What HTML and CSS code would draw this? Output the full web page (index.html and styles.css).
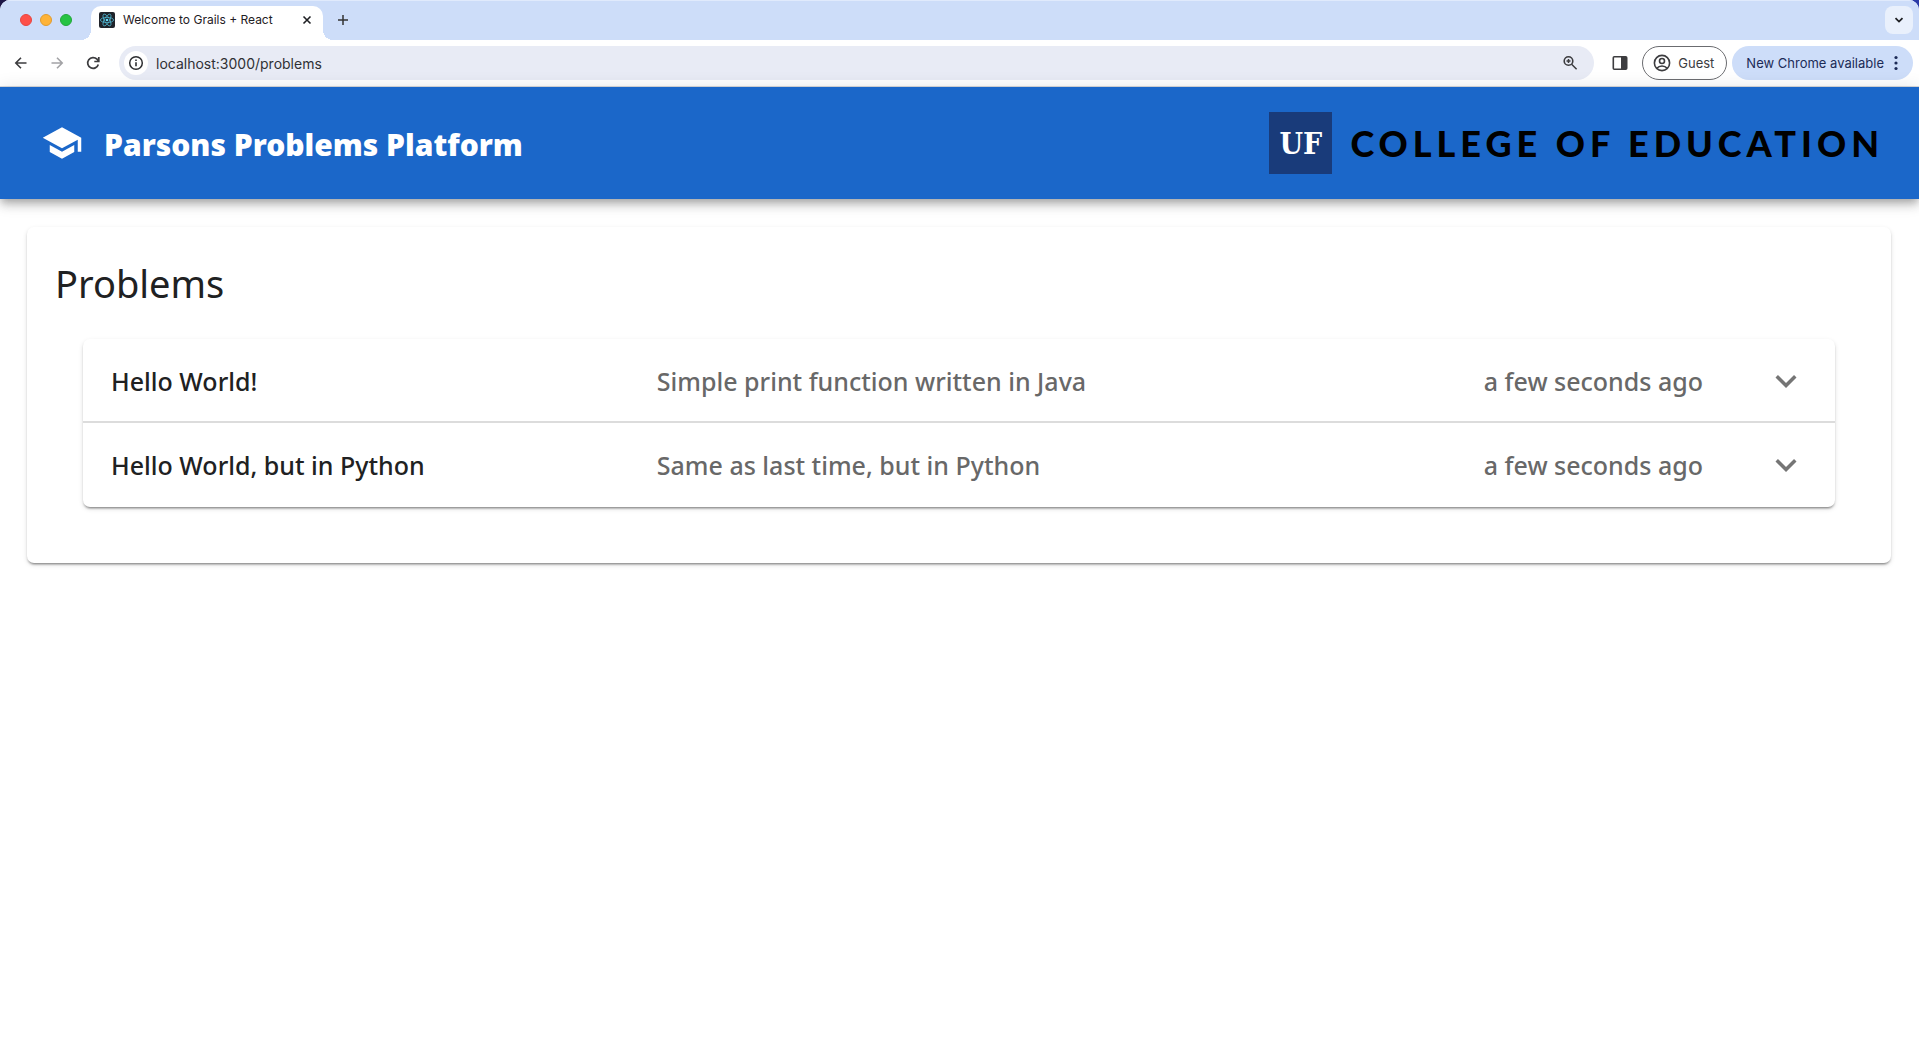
FILE: index.html
```html
<!DOCTYPE html>
<html lang="en">
<head>
<meta charset="utf-8">
<title>Welcome to Grails + React</title>
<link rel="stylesheet" href="styles.css">
</head>
<body>
<div class="desktop">
<div class="window">
  <div class="tabstrip">
    <div class="lights"><span class="light red"></span><span class="light yellow"></span><span class="light green"></span></div>
    <div class="tab">
      <svg class="favicon" viewBox="0 0 16 16" aria-hidden="true"><rect width="16" height="16" rx="2" fill="#20232a"/><g fill="none" stroke="#4fb4ce" stroke-width=".8"><ellipse cx="8" cy="8" rx="6.6" ry="2.6"/><ellipse cx="8" cy="8" rx="6.6" ry="2.6" transform="rotate(60 8 8)"/><ellipse cx="8" cy="8" rx="6.6" ry="2.6" transform="rotate(120 8 8)"/></g><circle cx="8" cy="8" r="1.3" fill="#61dafb"/></svg>
      <span class="tab-title">Welcome to Grails + React</span>
      <button class="icon-btn close" aria-label="Close tab"><svg width="16" height="16" viewBox="0 0 16 16"><path d="M4.5 4.5l7 7M11.5 4.5l-7 7" fill="none" stroke="#1f2024" stroke-width="1.6"/></svg></button>
    </div>
    <button class="icon-btn new-tab" aria-label="New tab"><svg width="16" height="16" viewBox="0 0 16 16"><path d="M8 3v10M3 8h10" fill="none" stroke="#333" stroke-width="1.5"/></svg></button>
    <button class="tab-search" aria-label="Search tabs"><svg width="16" height="16" viewBox="0 0 16 16"><path d="M4.5 6.2L8 9.6l3.5-3.4" fill="none" stroke="#1f2024" stroke-width="1.8"/></svg></button>
  </div>
  <div class="toolbar">
    <div class="nav">
      <button class="icon-btn" aria-label="Back"><svg width="16" height="16" viewBox="0 0 16 16"><path d="M13.5 8H3M8 2.800L2.800 8 8 13.200" fill="none" stroke="#3c3c3f" stroke-width="1.6"/></svg></button>
      <button class="icon-btn" aria-label="Forward" disabled><svg width="16" height="16" viewBox="0 0 16 16"><path d="M2.500 8H13M8 2.800L13.200 8 8 13.200" fill="none" stroke="#a3a3a6" stroke-width="1.6"/></svg></button>
      <button class="icon-btn" aria-label="Reload"><svg width="16" height="16" viewBox="0 0 16 16"><path d="M13.300 9.400A5.400 5.400 0 1 1 12 4.200L13.600 6M13.800 2v4.500H9.300" fill="none" stroke="#3c3c3f" stroke-width="1.7"/></svg></button>
    </div>
    <div class="omnibox">
      <button class="site-info" aria-label="Site information"><svg width="16" height="16" viewBox="0 0 16 16"><circle cx="8" cy="8" r="6.3" fill="none" stroke="#2d2e31" stroke-width="1.5"/><path d="M8 7.300v4M8 4.500v1.500" stroke="#2d2e31" stroke-width="1.6"/></svg></button>
      <input class="url" type="text" aria-label="Address" value="localhost:3000/problems">
      <button class="icon-btn" aria-label="Zoom"><svg width="16" height="16" viewBox="0 0 16 16"><circle cx="6.5" cy="6" r="4.3" fill="none" stroke="#3c3c3f" stroke-width="1.6"/><path d="M9.600 9.200l5 5M6.500 4v4M4.500 6h4" stroke="#3c3c3f" stroke-width="1.5"/></svg></button>
    </div>
    <button class="icon-btn side-panel" aria-label="Side panel"><svg width="16" height="16" viewBox="0 0 16 16"><rect x="1.3" y="1.8" width="13.4" height="12.4" rx="1" fill="none" stroke="#3c3c3f" stroke-width="1.6"/><path d="M9 2h6v12H9z" fill="#3c3c3f"/></svg></button>
    <button class="guest"><svg width="18" height="18" viewBox="0 0 18 18"><g fill="none" stroke="#3c3c3f" stroke-width="1.6"><circle cx="9" cy="9" r="7.6"/><circle cx="9" cy="7" r="2.5"/><path d="M3.800 14.200c2.600-3 7.800-3 10.400 0"/></g></svg>Guest</button>
    <button class="update">New Chrome available<svg width="4" height="16" viewBox="0 0 4 16" fill="#1c2b57"><circle cx="2" cy="2.5" r="1.6"/><circle cx="2" cy="8" r="1.6"/><circle cx="2" cy="13.5" r="1.6"/></svg></button>
  </div>
  <header class="app-bar">
    <svg class="school" width="42" height="42" viewBox="0 0 24 24" fill="#fff" aria-hidden="true"><path d="M5 13.180v4L12 21l7-3.820v-4L12 17l-7-3.820zM12 3L1 9l11 6 9-4.910V17h2V9L12 3z"/></svg>
    <h1 class="brand">Parsons Problems Platform</h1>
    <div class="college"><span class="uf">UF</span><span class="college-name">COLLEGE OF EDUCATION</span></div>
  </header>
  <main class="page">
    <section class="card">
      <h2 class="heading">Problems</h2>
      <div class="problems">
        <button class="problem" aria-expanded="false"><span class="name">Hello World!</span><span>Simple print function written in Java</span><span>a few seconds ago</span><svg width="42" height="42" viewBox="0 0 24 24" fill="#757575"><path d="M16.590 8.590L12 13.170 7.410 8.590 6 10l6 6 6-6z"/></svg></button>
        <button class="problem" aria-expanded="false"><span class="name">Hello World, but in Python</span><span>Same as last time, but in Python</span><span>a few seconds ago</span><svg width="42" height="42" viewBox="0 0 24 24" fill="#757575"><path d="M16.590 8.590L12 13.170 7.410 8.590 6 10l6 6 6-6z"/></svg></button>
      </div>
    </section>
  </main>
</div>
</div>
</body>
</html>
```
FILE: styles.css
```css
* { box-sizing: border-box; }
body { margin: 0; background: #fff; font-family: "Noto Sans", sans-serif; }
button { border: 0; padding: 0; background: none; font: inherit; color: inherit; }
svg { display: block; flex: none; }
h1, h2 { margin: 0; }

.desktop { background: linear-gradient(90deg, #1d1747, #2a3aa8); }
.window { min-height: 100vh; background: #fff; border-radius: 10px 10px 0 0; overflow: hidden; }
.icon-btn { display: flex; align-items: center; justify-content: center; }

.tabstrip { display: flex; align-items: center; height: 40px; padding: 0 6px 0 20px; background: #cdddf9; box-shadow: inset 0 1px #e0eafc; font-family: Inter, sans-serif; font-size: 12px; color: #1f2024; }
.lights { display: flex; gap: 8px; width: 71px; }
.light { width: 12px; height: 12px; border-radius: 50%; }
.red { background: #fe5049; border: 1px solid #e8453f; }
.yellow { background: #feb338; border: 1px solid #e09c2f; }
.green { background: #26c343; border: 1px solid #22a83a; }
.tab { position: relative; align-self: flex-end; display: flex; align-items: center; width: 232px; height: 34px; padding: 0 8px 6px; background: #fff; border-radius: 10px 10px 0 0; }
.tab::before, .tab::after { content: ""; position: absolute; bottom: 0; width: 10px; height: 10px; }
.tab::before { right: 100%; background: radial-gradient(circle at 0 0, transparent 10px, #fff 10px); }
.tab::after { left: 100%; background: radial-gradient(circle at 100% 0, transparent 10px, #fff 10px); }
.favicon { width: 16px; height: 16px; }
.tab-title { margin-left: 8px; line-height: 14px; }
.close { margin-left: auto; }
.new-tab { margin-left: 12px; }
.tab-search { display: flex; align-items: center; justify-content: center; width: 28px; height: 28px; margin-left: auto; background: #e9f0fc; border-radius: 8px; }

.toolbar { display: flex; align-items: center; height: 47px; padding: 0 6px 0 13px; background: #fff; border-bottom: 1px solid #d9dadd; font-family: Inter, sans-serif; font-size: 13px; color: #3c3c3f; }
.nav { display: flex; gap: 20px; margin-right: 18px; }
.omnibox { flex: 1; display: flex; align-items: center; height: 34px; padding: 0 16px 0 5px; background: #e8ebf5; border-radius: 17px; }
.site-info { display: flex; align-items: center; justify-content: center; width: 24px; height: 24px; background: #fff; border-radius: 50%; }
.url { flex: 1; min-width: 0; margin-left: 8px; padding: 0; border: 0; outline: 0; background: none; font: 14px Inter, sans-serif; color: #303134; }
.side-panel { margin: 0 14px 0 18px; }
.guest { display: flex; align-items: center; gap: 7px; height: 34px; padding: 0 12px 0 10px; border: 1px solid #6b6c70; border-radius: 17px; }
.update { display: flex; align-items: center; gap: 10px; height: 34px; margin-left: 5px; padding: 0 15px 0 14px; background: #cdddf9; border-radius: 17px; color: #1c2b57; }

.app-bar { position: relative; display: flex; align-items: center; height: 112px; padding: 0 35px 0 41px; background: #1b67c9; color: #fff; box-shadow: 0 4px 7px -2px rgba(0,0,0,.2), 0 7px 9px rgba(0,0,0,.14), 0 2px 18px rgba(0,0,0,.12); }
.brand { margin-left: 21px; padding-top: 4px; font-size: 30px; font-weight: 900; line-height: 42px; white-space: nowrap; }
.college { display: flex; align-items: center; gap: 18px; margin-left: auto; }
.uf { display: flex; align-items: center; justify-content: center; width: 63px; height: 62px; background: #193b7a; font-family: "DejaVu Serif Condensed", "DejaVu Serif", serif; font-size: 30px; font-weight: 700; }
.college-name { color: #000; font-family: Lato, sans-serif; font-size: 36px; font-weight: 900; line-height: 44px; letter-spacing: 5px; white-space: nowrap; }

.page { padding: 28px 28px 28px 27px; }
.card { padding: 28px 28px 56px; background: #fff; border-radius: 7px; box-shadow: 0 3px 2px -2px rgba(0,0,0,.3), 0 2px 2px rgba(0,0,0,.14), 0 2px 5px rgba(0,0,0,.12); }
.heading { padding-bottom: 28px; font-size: 38px; font-weight: 400; line-height: 56px; color: #202122; }
.problems { margin: 0 28px; background: #fff; border-radius: 7px; box-shadow: 0 3px 2px -2px rgba(0,0,0,.3), 0 2px 2px rgba(0,0,0,.14), 0 2px 5px rgba(0,0,0,.12); }
.problem { display: grid; grid-template-columns: 33fr 50fr 17fr 42px; align-items: center; width: 100%; height: 84px; padding: 0 28px; font-size: 25px; font-weight: 500; line-height: 40px; text-align: left; color: #686868; }
.problem:not(:last-child) { box-shadow: inset 0 -2px #dcdcdc; }
.name { color: #202122; }
```
